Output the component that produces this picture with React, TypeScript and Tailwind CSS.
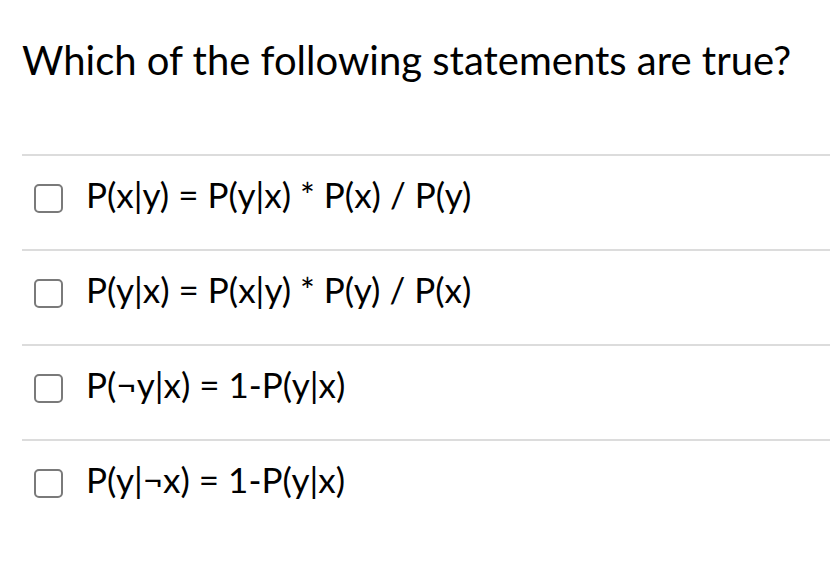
import React from 'react';

const options = [
  'P(x|y) = P(y|x) * P(x) / P(y)',
  'P(y|x) = P(x|y) * P(y) / P(x)',
  'P(¬y|x) = 1-P(y|x)',
  'P(y|¬x) = 1-P(y|x)',
];

export default function App() {
  return (
    <div
      className="w-[835px] h-[569px] bg-white text-black overflow-hidden"
      style={{ fontFamily: 'Lato, "Open Sans", sans-serif' }}
    >
      <h1 className="pl-[22px] pt-[36px] text-[40px] leading-[48px] font-normal">
        Which of the following statements are true?
      </h1>

      <div className="mt-[70px] ml-[22px] mr-[5px]">
        {options.map((opt, i) => (
          <div key={i} className="border-t-2 border-[#dcdcdc] h-[95px] flex items-start pt-[17px]">
            <span className="ml-[12px] mt-[11px] w-[29px] h-[29px] rounded-[5px] border-2 border-[#7a7a7a] bg-white shrink-0" />
            <span className="ml-[23px] text-[35px] leading-[42px]">{opt}</span>
          </div>
        ))}
      </div>
    </div>
  );
}
